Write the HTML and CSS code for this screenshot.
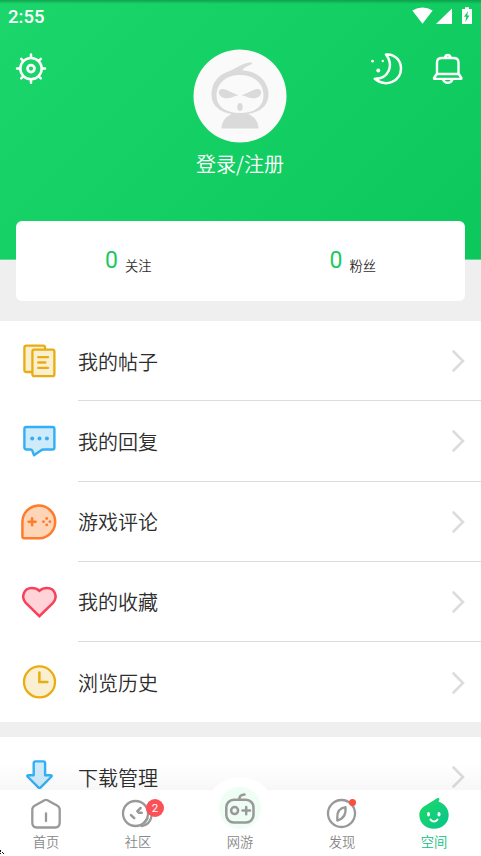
FILE: index.html
```html
<!DOCTYPE html>
<html lang="zh-CN">
<head>
<meta charset="utf-8">
<title>空间</title>
<link rel="stylesheet" href="styles.css">
</head>
<body>
<div class="app">
  <header class="hero">
    <div class="status">
      <span class="time">2:55</span>
      <svg class="status-icons" width="62" height="20" viewBox="412 6 62 20" fill="#fff">
        <path d="M412.3 10.5Q422.5 4.5 432.7 10.5L422.5 23.8Z"/>
        <path d="M436 24L452 8.5V24Z"/>
        <path d="M462 9h3V7.2h4V9h3v15h-10z"/>
        <path d="M468 11l-4 5.8h2.3l-1 5.2 4.2-6.4h-2.3l.8-4.6z" fill="#10cb60"/>
      </svg>
    </div>
    <div class="profile">
      <svg class="tool" width="32" height="32" viewBox="15 53 32 32" fill="none" stroke="#fff" stroke-width="2.5" stroke-linecap="round">
        <circle cx="31" cy="68.6" r="10.7"/><circle cx="31" cy="68.6" r="3.5" stroke-width="2.7"/>
        <path d="M31 57.5v-3M31 79.7v3M20 68.6h-3M42 68.6h3M23 60.6l-1.8-1.8M39 60.6l1.8-1.8M23 76.6l-1.8 1.8M39 76.6l1.8 1.8"/>
      </svg>
      <div class="account">
        <svg class="avatar" width="94" height="94" viewBox="0 0 94 94">
          <circle cx="47" cy="47" r="46.5" fill="#fafafa"/>
          <path d="M28.5 79.500c0-7 4-11.500 10-14.500h17c6 3 10 7.500 10 14.500z" fill="#dadada"/>
          <path d="M33 23.500c8-3 15-8.500 23-10 4-.5 4 1 1.500 2.200C54 17 51 18.500 49 21.300 65 22 75.500 32.500 75.500 45.500 75.500 58 65 65.500 47 65.500S18.500 58 18.500 45.500C18.500 35 24 27 33 23.500z" fill="#dadada"/>
          <path d="M47 26c14 0 23.500 8.500 23.500 20.500 0 11-9 17.500-23.500 17.500s-23.500-6.500-23.500-17.500C23.500 34.500 33 26 47 26z" fill="#fafafa"/>
          <path d="M45.500 46.300c-7-2.500-12-6.300-16-6.300-6 0-4.500 9 3.500 9.300 5 .2 8-2.300 12.500-3zM48.500 46.300c7-2.500 12-6.300 16-6.300 6 0 4.500 9-3.500 9.300-5 .2-8-2.300-12.500-3z" fill="#dadada"/>
          <ellipse cx="47" cy="58" rx="2.700" ry="4.100" fill="#dadada"/>
        </svg>
        <span class="login">登录/注册</span>
      </div>
      <div class="tools">
        <svg class="tool" width="34" height="32" viewBox="370 53 34 32" fill="none" stroke="#fff" stroke-width="2.500" stroke-linejoin="round">
          <path d="M386 54.500C396 53.500 401 62 401 68.500 401 81 386 88 374.800 78.800 388 79 394.500 66 386 54.500z"/>
          <g fill="#fff" stroke="none"><circle cx="378.300" cy="70.500" r="2"/><circle cx="372.500" cy="61.200" r="1.400"/><circle cx="382.800" cy="61" r="1.200"/></g>
        </svg>
        <svg class="tool" width="32" height="32" viewBox="432 53 32 32" fill="none" stroke="#fff" stroke-width="2.400" stroke-linejoin="round">
          <path d="M437 73.500V62.500q0-4.500 5-4.500h11.500q5 0 5 4.500v11l2.900 4.500q.3.900-.8.900h-25.800q-1.100 0-.8-.9zM436.800 74h22"/>
          <path d="M443 79.500c2 4.500 7.500 4.500 9.500 0M445 57.500c.7-3.300 4.800-3.300 5.500 0"/>
        </svg>
      </div>
    </div>
  </header>

  <section class="stats">
    <div class="stat"><b class="count">0</b><span class="stat-label">关注</span></div>
    <div class="stat"><b class="count">0</b><span class="stat-label">粉丝</span></div>
  </section>

  <main class="menu">
    <a class="row">
      <svg class="icon" viewBox="0 0 40 40" fill="#fbefd1" stroke="#e8ad10" stroke-width="2.300">
        <rect x="4.400" y="4.700" width="20.700" height="26.300" rx="2"/><rect x="12.400" y="8.700" width="22" height="26.500" rx="2"/>
        <path d="M18.200 16.200h9.800M18.200 21.500h7.200M18.200 26.900h9.800" stroke-linecap="round"/>
      </svg>
      <div class="body"><span>我的帖子</span><svg class="chevron" viewBox="0 0 14 24"><path d="M2.500 2.500l9.500 9.500-9.500 9.500"/></svg></div>
    </a>
    <a class="row">
      <svg class="icon" viewBox="0 0 40 40" fill="#cfeaf9" stroke="#33b0f4" stroke-width="2.400" stroke-linejoin="round">
        <path d="M6.400 6H32.400q2 0 2 2v18.500q0 2-2 2H24q-2 0-3.500 1.200L14 34.200 12.300 29.700q-.5-1.200-1.800-1.200H6.400q-2 0-2-2V8q0-2 2-2z"/>
        <g fill="#33b0f4" stroke="none"><circle cx="12.200" cy="17.500" r="2"/><circle cx="19.500" cy="17.500" r="2"/><circle cx="26.900" cy="17.500" r="2"/></g>
      </svg>
      <div class="body"><span>我的回复</span><svg class="chevron" viewBox="0 0 14 24"><path d="M2.500 2.500l9.500 9.500-9.500 9.500"/></svg></div>
    </a>
    <a class="row">
      <svg class="icon" viewBox="0 0 40 40" fill="#ffd5b8" stroke="#ff7c2b" stroke-width="2.500">
        <path d="M4.200 36.300q-1.800 0-1.800-1.800V20.300A16.400 16.400 0 1 1 19.400 36.300z"/>
        <path d="M8.600 19.800h7M12.100 16.300v7" stroke-linecap="round"/>
        <g fill="#ff7c2b" stroke="none"><circle cx="26.700" cy="16.500" r="1.400"/><circle cx="26.700" cy="22.900" r="1.400"/><circle cx="23.500" cy="19.700" r="1.400"/><circle cx="29.900" cy="19.700" r="1.400"/></g>
      </svg>
      <div class="body"><span>游戏评论</span><svg class="chevron" viewBox="0 0 14 24"><path d="M2.500 2.500l9.500 9.500-9.500 9.500"/></svg></div>
    </a>
    <a class="row">
      <svg class="icon" viewBox="0 0 40 40" fill="#ffd3d8" stroke="#f94059" stroke-width="2.500">
        <path d="M19.400 8.800Q22.500 6 27 6C35 6 38.200 15 33 20.800L19.400 34.200 5.800 20.800C.6 15 3.800 6 11.800 6Q16.300 6 19.400 8.800z"/>
      </svg>
      <div class="body"><span>我的收藏</span><svg class="chevron" viewBox="0 0 14 24"><path d="M2.500 2.500l9.500 9.500-9.500 9.500"/></svg></div>
    </a>
    <a class="row">
      <svg class="icon" viewBox="0 0 40 40" fill="#fbefd1" stroke="#e8ad10" stroke-width="2.300">
        <circle cx="19.500" cy="19.900" r="15.500"/><path d="M19.400 10.500v9.500h8" fill="none" stroke-width="2.500" stroke-linecap="round"/>
      </svg>
      <div class="body"><span>浏览历史</span><svg class="chevron" viewBox="0 0 14 24"><path d="M2.500 2.500l9.500 9.500-9.500 9.500"/></svg></div>
    </a>
  </main>
  <section class="menu downloads">
    <a class="row">
      <svg class="icon" viewBox="0 0 40 40" fill="#cfeaf9" stroke="#33b0f4" stroke-width="2.400" stroke-linejoin="round">
        <path d="M15.500 4.400h7.800q1.800 0 1.800 1.800v12h5.200q2.400 0 .8 1.800L20.700 30.300q-1.200 1.200-2.400 0L7.900 20q-1.600-1.800.8-1.800h5V6.200q0-1.800 1.800-1.800z"/>
      </svg>
      <div class="body"><span>下载管理</span><svg class="chevron" viewBox="0 0 14 24"><path d="M2.500 2.500l9.500 9.500-9.500 9.500"/></svg></div>
    </a>
  </section>

  <nav class="tabs">
    <a class="tab">
      <svg class="tab-icon" viewBox="0 0 34 34" fill="none" stroke="#999" stroke-width="2.300" stroke-linecap="round">
        <path d="M15.500 3.200q1.500-.8 3 0l9.500 5.200q2.700 1.500 2.700 4V25.500q0 5-4.500 5H7.800q-4.500 0-4.500-5V12.400q0-2.500 2.700-4z"/><path d="M17 16.500v7.500"/>
      </svg><span>首页</span>
    </a>
    <a class="tab">
      <svg class="tab-icon" viewBox="0 0 34 34" fill="none" stroke="#999" stroke-width="2.300" stroke-linecap="round">
        <circle cx="14.500" cy="16.500" r="12.500"/><path d="M20.500 29c7.500-.5 11.500-8 9.500-15M23.500 25.500l3-4"/>
        <path d="M10 18.200l3.200 3M16.300 14.200l1.600 1.600h2.800M19.600 11l-2.600 2.600" stroke-width="2.500"/>
      </svg><span>社区</span><i class="badge">2</i>
    </a>
    <a class="tab center">
      <i class="halo"></i>
      <svg class="game-icon" viewBox="0 0 34 34" fill="none" stroke="#999" stroke-width="2.500" stroke-linecap="round">
        <rect x="3.300" y="7.800" width="27.200" height="22.800" rx="7.500"/><circle cx="11.600" cy="18.600" r="3.500"/><path d="M19.500 18.600h7.500M23.200 14.900v7.400M16.500 7V6q.3-3 5-3.400"/>
      </svg><span>网游</span>
    </a>
    <a class="tab">
      <svg class="tab-icon" viewBox="0 0 34 34" fill="none" stroke="#999" stroke-width="2.300">
        <circle cx="16.500" cy="16.500" r="13.500"/><path d="M20.500 10.200Q12 11.700 12.300 20.200v3.400Q21.500 21.200 20.500 10.200z" stroke-linejoin="round"/>
      </svg><span>发现</span><i class="dot"></i>
    </a>
    <a class="tab active">
      <svg class="tab-icon" viewBox="0 0 34 34">
        <defs><linearGradient id="leaf" x1="0" y1="0" x2="1" y2="1"><stop offset="0" stop-color="#1fdb65"/><stop offset="1" stop-color="#08c38c"/></linearGradient></defs>
        <path d="M20 1.200q2.200-.8 2.400.6 0 1.500-1 2.600C28 7 31.700 12 31.700 17.700 31.700 26 25.500 31.700 17 31.700S2.300 26 2.300 17.700C2.300 10 9.500 8.500 20 1.200z" fill="url(#leaf)"/>
        <g fill="#fff"><ellipse cx="11.500" cy="17.200" rx="1.500" ry="2.300"/><ellipse cx="22" cy="17.200" rx="1.500" ry="2.300"/></g><path d="M13.500 22.600q3.500 3.800 7 0" fill="none" stroke="#fff" stroke-width="2" stroke-linecap="round"/>
      </svg><span>空间</span>
    </a>
  </nav>
  <svg class="corner" width="5" height="6" viewBox="0 0 5 6" fill="#111"><path d="M0 0h1v2H0zM2 2h1v1H2zM3 3h1v1H3zM0 3h1v1H0z"/></svg>
</div>
</body>
</html>
```
FILE: styles.css
```css
* { box-sizing: border-box; }
html, body { height: 856px; overflow: hidden; }
body {
  margin: 0;
  font-family: "Noto Sans CJK SC", sans-serif;
  font-weight: 350;
  color: #2d2d2d;
}
svg { display: block; flex: none; }
i { font-style: normal; }
.app {
  position: relative;
  width: 481px;
  height: 856px;
  overflow: hidden;
  background: #efefef;
}
.hero {
  height: 260px;
  background: linear-gradient(135deg, #1bd66b 0%, #0cc85c 100%);
  border-bottom: 1px solid #63da94;
}
.hero::before {
  content: "";
  position: absolute;
  top: 0;
  left: 0;
  width: 100%;
  height: 4px;
  background: linear-gradient(rgba(0, 70, 30, .35), rgba(0, 70, 30, 0));
}
.status {
  display: flex;
  justify-content: space-between;
  height: 49px;
  padding: 6px 7px 0 8px;
}
.time {
  font: 500 18.5px/22px Roboto, sans-serif;
  color: #fff;
}
.profile {
  display: grid;
  grid-template-columns: 1fr 94px 1fr;
  padding: 0 16px 0 15px;
}
.tool { margin-top: 4px; }
.account {
  display: flex;
  flex-direction: column;
  align-items: center;
}
.login {
  margin-top: 6px;
  font-size: 20px;
  line-height: 30px;
  white-space: nowrap;
  color: #fff;
}
.tools {
  display: flex;
  justify-content: flex-end;
  gap: 28px;
  margin-right: 1px;
}
.stats {
  position: relative;
  display: flex;
  height: 80px;
  margin: -39px 16px 20px;
  border-radius: 6px;
  background: #fff;
}
.stat {
  flex: 1;
  display: flex;
  justify-content: center;
  align-items: flex-start;
  gap: 7px;
  padding-top: 26px;
  font-size: 13.3px;
  line-height: 20px;
}
.stat-label { margin-top: 9px; }
.count {
  font: 400 23px/28px Roboto, sans-serif;
  color: #17ca60;
}
.menu { background: #fff; }
.row {
  display: flex;
  align-items: center;
  height: 80.25px;
  padding-left: 20px;
}
.icon { width: 40px; height: 40px; }
.body {
  flex: 1;
  display: flex;
  align-items: center;
  justify-content: space-between;
  height: 100%;
  margin-left: 18px;
  padding: 1px 16px 0 0;
  border-bottom: 1px solid #dcdcdc;
  font-size: 20px;
}
.row:last-child .body { border-bottom: 0; }
.chevron {
  width: 14px;
  height: 24px;
  fill: none;
  stroke: #dcdcdc;
  stroke-width: 2.6;
  stroke-linecap: round;
}
.downloads { margin-top: 15px; }
.downloads .row { height: 79px; }
.tabs {
  position: absolute;
  left: 0;
  bottom: 0;
  display: flex;
  width: 481px;
  height: 66px;
  background: #fff;
}
.tabs::before {
  content: "";
  position: absolute;
  left: 0;
  bottom: 66px;
  width: 481px;
  height: 26px;
  background: linear-gradient(rgba(0, 0, 0, 0), rgba(0, 0, 0, .03));
}
.tab {
  position: relative;
  display: flex;
  flex-direction: column;
  align-items: center;
  width: 92px;
  padding-top: 7px;
  font-size: 13.3px;
  line-height: 22px;
  color: #888;
}
.tab-icon { width: 34px; height: 34px; }
.center { width: 112px; padding-top: 2px; }
.game-icon { position: relative; width: 34px; height: 34px; margin-bottom: 5px; }
.halo {
  position: absolute;
  top: -13px;
  left: 20px;
  width: 72px;
  height: 72px;
  border-radius: 50%;
  background: radial-gradient(circle at 36px 31px, #effef5 20.5px, #fff 21.5px);
}
.center span { position: relative; }
.badge {
  position: absolute;
  top: 9px;
  left: 54px;
  width: 18px;
  height: 18px;
  border-radius: 50%;
  background: #fa5157;
  font: 400 11.5px/18px Roboto, sans-serif;
  text-align: center;
  color: #fff;
}
.dot {
  position: absolute;
  top: 9px;
  left: 53px;
  width: 7px;
  height: 7px;
  border-radius: 50%;
  background: #f7503d;
}
.active { color: #0fc080; }
.corner { position: absolute; left: 0; bottom: 0; }
```
